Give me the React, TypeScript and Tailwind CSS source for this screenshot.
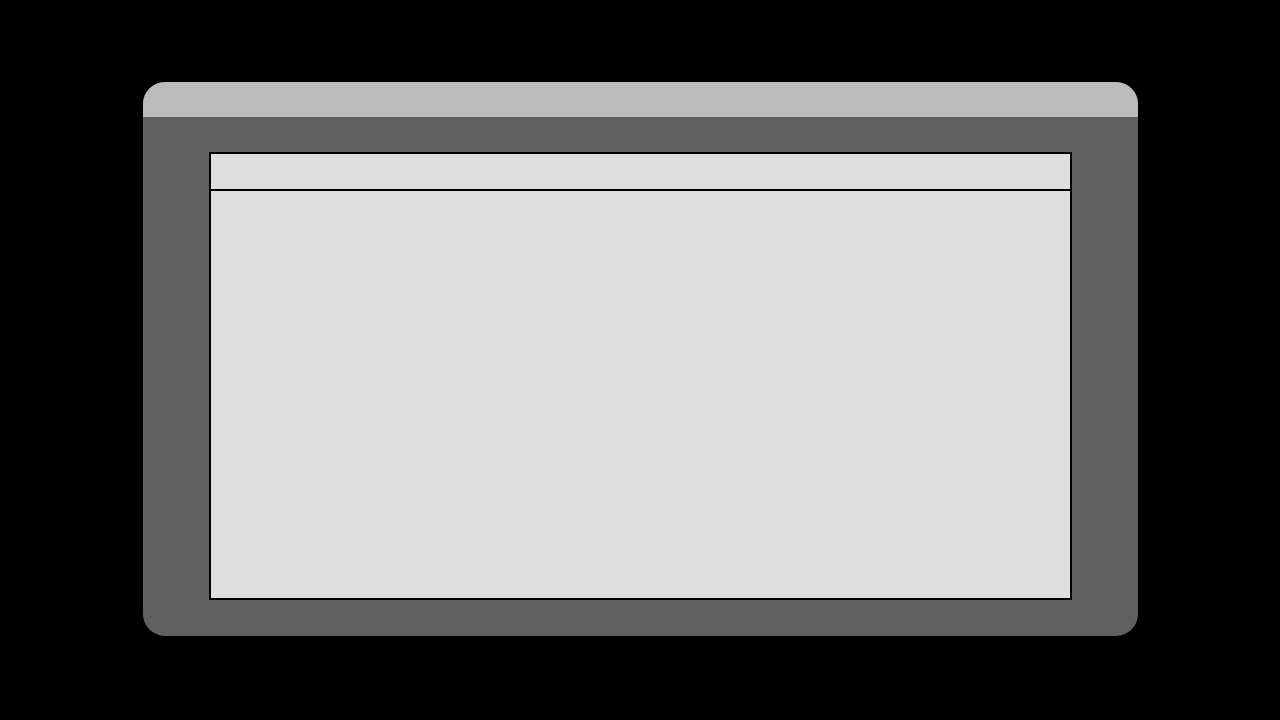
import React from "react";

export default function App() {
  return (
    <div className="min-h-screen w-full bg-black flex flex-col items-center pt-[82px]" style={{ fontFamily: "'Liberation Sans', sans-serif" }}>
      <div className="w-[995px] h-[554px] rounded-[22px] overflow-hidden bg-[#606060] flex flex-col">
        <div className="h-[35px] bg-[#bbbbbb] shrink-0" />
        <div className="flex-1 px-[66px] pt-[35px] pb-[36px] flex flex-col">
          <div className="flex-1 border-2 border-black bg-[#dfdfdf] flex flex-col">
            <div className="h-[37px] border-b-2 border-black shrink-0" />
            <div className="flex-1" />
          </div>
        </div>
      </div>
    </div>
  );
}
